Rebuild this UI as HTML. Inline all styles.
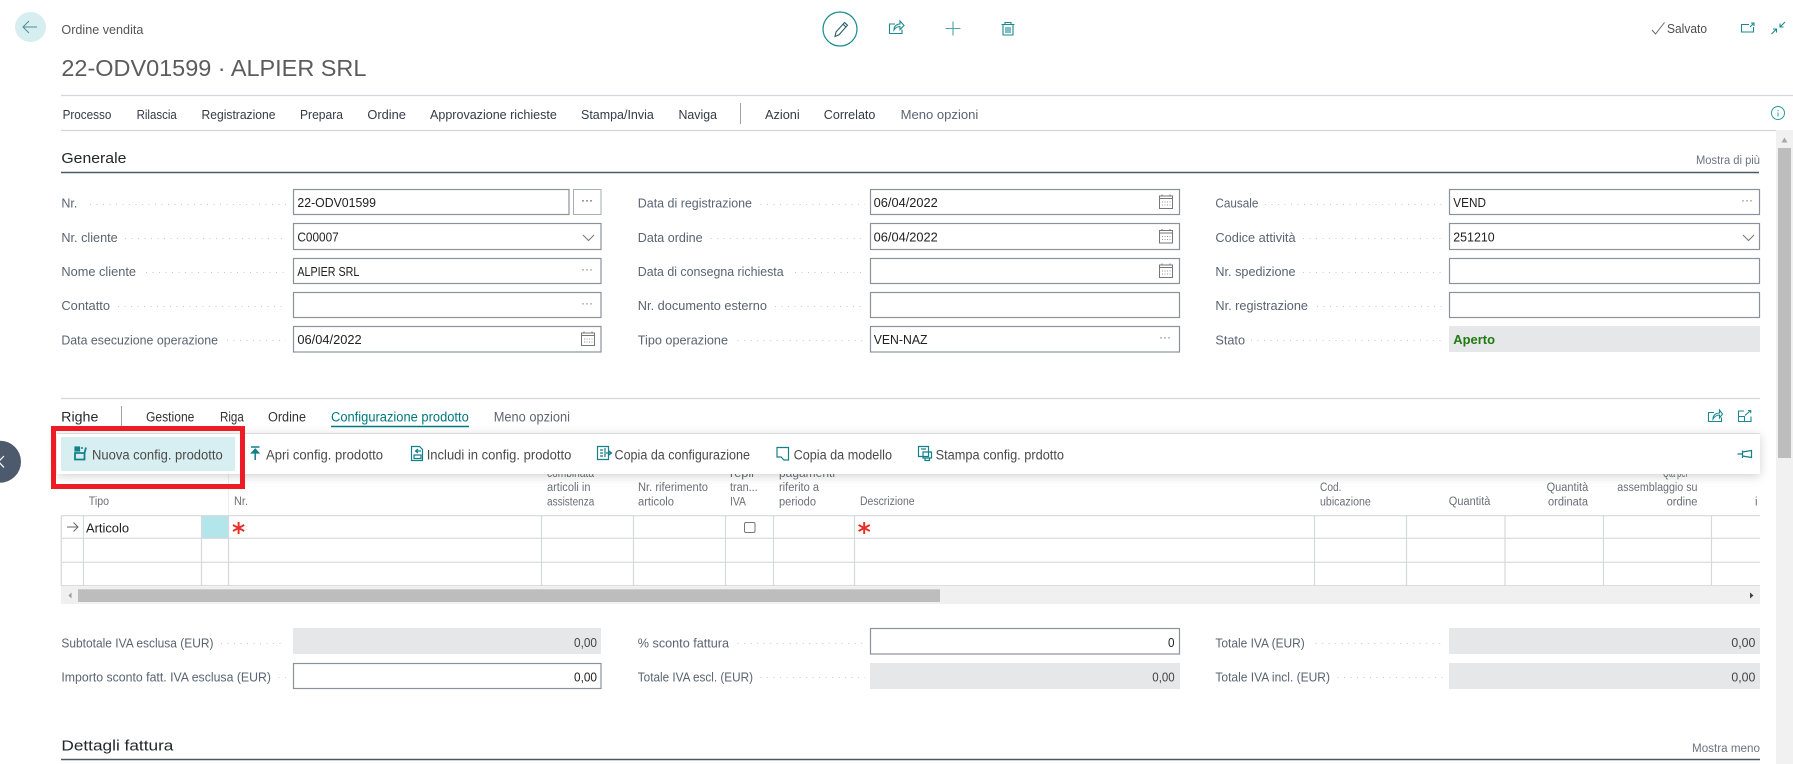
<!DOCTYPE html>
<html lang="it"><head><meta charset="utf-8"><title>Ordine vendita</title>
<style>
html,body{margin:0;padding:0;background:#fff;width:1793px;height:764px;overflow:hidden}
svg{display:block;font-family:"Liberation Sans",sans-serif}
.l{font-size:12.5px;fill:#5a6472}
.v{font-size:12.5px;fill:#212121}
.n{font-size:12.5px;fill:#333b45}
.a{font-size:13.5px;fill:#4a4a4a}
.h{font-size:11.5px;fill:#6b7480}
.d{stroke:#c4c8cc;stroke-width:1;stroke-dasharray:1 5.5;fill:none}
.i{fill:#fff;stroke:#8a939c;stroke-width:1.2}
.g{fill:#e6e7e8}
.t{stroke:#1a8a90;stroke-width:1.1;fill:none}
.s{stroke:#d3d6da;stroke-width:1.2}
.c{stroke:#d6d8db;stroke-width:1.2}
.cal{stroke:#777;stroke-width:1;fill:none}
.cal path+path{stroke:#999;stroke-dasharray:1 1.5}
.dots{font-size:12px;fill:#777}
</style></head><body>
<svg width="1793" height="764" viewBox="0 0 1793 764" xmlns="http://www.w3.org/2000/svg">
<rect width="1793" height="764" fill="#fff"/>

<!-- page scrollbar -->
<rect x="1776" y="130" width="17" height="634" fill="#f1f1f1"/>
<rect x="1778" y="148" width="13" height="310" fill="#bdbdbd"/>
<path d="M1784.500 137.500l-3 5h6z" fill="#a8a8a8"/>

<!-- back -->
<ellipse cx="30.500" cy="27" rx="15.500" ry="15" fill="#d6eef0"/>
<path d="M37 27H23.500M29 21l-6 6 6 6" fill="none" stroke="#4d8f96" stroke-width="1"/>
<text x="61.400" y="34" class="l" style="font-size:12.500px;fill:#555" textLength="82" lengthAdjust="spacingAndGlyphs">Ordine vendita</text>
<text x="61.400" y="76" style="font-size:23px;fill:#5c5c5c" textLength="305" lengthAdjust="spacingAndGlyphs">22-ODV01599 · ALPIER SRL</text>

<!-- top icons -->
<ellipse cx="840" cy="29" rx="17" ry="17" fill="#fff" stroke="#168a90" stroke-width="1.200"/>
<path class="t" d="M835 36.500l1-4.500 8.500-9.500 3 2.700-8.500 9.600zM843 24.200l3 2.700" style="stroke:#2a5f63"/>
<path class="t" d="M895 24h-5.500v9.500h12.500v-4M894 30c0-4 3-6 6-6v-3l4 4.500-4 4v-3c-2.500 0-4.500 1-6 3.500z"/>
<path class="t" d="M953 21.500v14M945.500 28.500h15" style="stroke:#4aa6ab"/>
<path class="t" d="M1001.500 24.500h13M1005 24.500v-2h6v2M1003 24.500v10.500h10v-10.500M1006 27v6M1008 27v6M1010 27v6"/>
<path d="M1652 30l3.500 4 9-11.500" fill="none" stroke="#666" stroke-width="1"/>
<text x="1667" y="33" class="l" textLength="40" lengthAdjust="spacingAndGlyphs" style="fill:#4d4d4d">Salvato</text>
<path class="t" d="M1749 24.500h-7.500v7.500h12v-5M1750 27l4-4M1751 23h3v3"/>
<path class="t" d="M1785 22l-5 5M1780 23.500v3.500h3.500M1771.500 34l5-5M1776.500 32.500v-3.500h-3.500"/>

<!-- header lines & nav -->
<line x1="61" y1="95.500" x2="1793" y2="95.500" class="s"/>
<line x1="61" y1="130.500" x2="1776" y2="130.500" class="s"/>
<text y="119" class="n" x="62.600" textLength="48.800" lengthAdjust="spacingAndGlyphs">Processo</text>
<text y="119" class="n" x="136.600" textLength="40.200" lengthAdjust="spacingAndGlyphs">Rilascia</text>
<text y="119" class="n" x="201.500" textLength="74" lengthAdjust="spacingAndGlyphs">Registrazione</text>
<text y="119" class="n" x="300" textLength="43" lengthAdjust="spacingAndGlyphs">Prepara</text>
<text y="119" class="n" x="367.400" textLength="38.500" lengthAdjust="spacingAndGlyphs">Ordine</text>
<text y="119" class="n" x="430" textLength="126.800" lengthAdjust="spacingAndGlyphs">Approvazione richieste</text>
<text y="119" class="n" x="581" textLength="72.800" lengthAdjust="spacingAndGlyphs">Stampa/Invia</text>
<text y="119" class="n" x="678.500" textLength="38.500" lengthAdjust="spacingAndGlyphs">Naviga</text>
<line x1="740.500" y1="103" x2="740.500" y2="124" stroke="#9ba1a8"/>
<text y="119" class="n" x="765" textLength="34.700" lengthAdjust="spacingAndGlyphs">Azioni</text>
<text y="119" class="n" x="823.800" textLength="51.600" lengthAdjust="spacingAndGlyphs">Correlato</text>
<text y="119" class="l" x="900.600" textLength="77.700" lengthAdjust="spacingAndGlyphs">Meno opzioni</text>
<circle cx="1778" cy="113" r="6.500" fill="none" stroke="#2a9aa0" stroke-width="1"/>
<path d="M1778 110v1.200M1778 112.500v4" stroke="#2a9aa0" stroke-width="1"/>

<!-- Generale -->
<text x="61.400" y="163" style="font-size:15px;fill:#23272b" textLength="65" lengthAdjust="spacingAndGlyphs">Generale</text>
<text x="1696" y="164" class="h" textLength="64" lengthAdjust="spacingAndGlyphs">Mostra di più</text>
<line x1="61" y1="172.500" x2="1759" y2="172.500" stroke="#4b5a68" stroke-width="1.500"/>

<!-- row 1 -->
<text x="61.400" y="207.500" class="l" textLength="16" lengthAdjust="spacingAndGlyphs">Nr.</text><line x1="90" x2="286" y1="204.500" y2="204.500" class="d"/>
<rect x="293.500" y="189.500" width="275.500" height="25" class="i"/>
<text x="297.400" y="207" class="v" textLength="78.600" lengthAdjust="spacingAndGlyphs">22-ODV01599</text>
<rect x="573.500" y="189.500" width="27.500" height="25" fill="#fff" stroke="#a7adb3" stroke-width="1"/>
<text x="581" y="204" class="dots" style="fill:#222">···</text>

<text x="637.800" y="207.500" class="l" textLength="114.200" lengthAdjust="spacingAndGlyphs">Data di registrazione</text><line x1="760.600" x2="865" y1="204.500" y2="204.500" class="d"/>
<rect x="870.500" y="189.500" width="309" height="25" class="i"/>
<text x="873.700" y="207" class="v" textLength="64.100" lengthAdjust="spacingAndGlyphs">06/04/2022</text>
<g class="cal"><path d="M1159.500 196h13v12.500h-13zM1159.500 198.500h13M1162 196v-1.500M1170 196v-1.500"/><path d="M1162 202h9M1162 205h9"/></g>

<text x="1215.400" y="207.500" class="l" textLength="43" lengthAdjust="spacingAndGlyphs">Causale</text><line x1="1265" x2="1443" y1="204.500" y2="204.500" class="d"/>
<rect x="1449.500" y="189.500" width="310" height="25" class="i"/>
<text x="1453.300" y="207" class="v" textLength="32.700" lengthAdjust="spacingAndGlyphs">VEND</text>
<text x="1741" y="204" class="dots">···</text>

<!-- row 2 -->
<text x="61.400" y="242" class="l" textLength="56.300" lengthAdjust="spacingAndGlyphs">Nr. cliente</text><line x1="125" x2="286" y1="238.500" y2="238.500" class="d"/>
<rect x="293.500" y="223.500" width="307.500" height="26" class="i"/>
<text x="297.400" y="241.500" class="v" textLength="41.300" lengthAdjust="spacingAndGlyphs">C00007</text>
<path d="M583 235l5.500 5.500 5.500-5.500" fill="none" stroke="#777" stroke-width="1"/>

<text x="637.800" y="242" class="l" textLength="64.800" lengthAdjust="spacingAndGlyphs">Data ordine</text><line x1="710.700" x2="865" y1="238.500" y2="238.500" class="d"/>
<rect x="870.500" y="223.500" width="309" height="26" class="i"/>
<text x="873.700" y="241.500" class="v" textLength="64.100" lengthAdjust="spacingAndGlyphs">06/04/2022</text>
<g class="cal"><path d="M1159.500 230.500h13v12.500h-13zM1159.500 233h13M1162 230.500v-1.500M1170 230.500v-1.500"/><path d="M1162 236.500h9M1162 239.500h9"/></g>

<text x="1215.400" y="242" class="l" textLength="80.200" lengthAdjust="spacingAndGlyphs">Codice attività</text><line x1="1303" x2="1443" y1="238.500" y2="238.500" class="d"/>
<rect x="1449.500" y="223.500" width="310" height="26" class="i"/>
<text x="1453.300" y="241.500" class="v" textLength="41.300" lengthAdjust="spacingAndGlyphs">251210</text>
<path d="M1743 235l5.500 5.500 5.500-5.500" fill="none" stroke="#777" stroke-width="1"/>

<!-- row 3 -->
<text x="61.400" y="276" class="l" textLength="74.600" lengthAdjust="spacingAndGlyphs">Nome cliente</text><line x1="146" x2="286" y1="272.500" y2="272.500" class="d"/>
<rect x="293.500" y="258.500" width="307.500" height="25" class="i"/>
<text x="297.400" y="276" class="v" textLength="62" lengthAdjust="spacingAndGlyphs">ALPIER SRL</text>
<text x="581" y="273" class="dots">···</text>

<text x="637.800" y="276" class="l" textLength="145.800" lengthAdjust="spacingAndGlyphs">Data di consegna richiesta</text><line x1="795" x2="865" y1="272.500" y2="272.500" class="d"/>
<rect x="870.500" y="258.500" width="309" height="25" class="i"/>
<g class="cal"><path d="M1159.500 265h13v12.500h-13zM1159.500 267.500h13M1162 265v-1.500M1170 265v-1.500"/><path d="M1162 271h9M1162 274h9"/></g>

<text x="1215.400" y="276" class="l" textLength="80.200" lengthAdjust="spacingAndGlyphs">Nr. spedizione</text><line x1="1303" x2="1443" y1="272.500" y2="272.500" class="d"/>
<rect x="1449.500" y="258.500" width="310" height="25" class="i"/>

<!-- row 4 -->
<text x="61.400" y="310" class="l" textLength="48.600" lengthAdjust="spacingAndGlyphs">Contatto</text><line x1="118" x2="286" y1="306.500" y2="306.500" class="d"/>
<rect x="293.500" y="292.500" width="307.500" height="25" class="i"/>
<text x="581" y="307" class="dots">···</text>

<text x="637.800" y="310" class="l" textLength="129.200" lengthAdjust="spacingAndGlyphs">Nr. documento esterno</text><line x1="775" x2="865" y1="306.500" y2="306.500" class="d"/>
<rect x="870.500" y="292.500" width="309" height="25" class="i"/>

<text x="1215.400" y="310" class="l" textLength="92.600" lengthAdjust="spacingAndGlyphs">Nr. registrazione</text><line x1="1317" x2="1443" y1="306.500" y2="306.500" class="d"/>
<rect x="1449.500" y="292.500" width="310" height="25" class="i"/>

<!-- row 5 -->
<text x="61.400" y="344.500" class="l" textLength="156.600" lengthAdjust="spacingAndGlyphs">Data esecuzione operazione</text><line x1="227" x2="286" y1="340.500" y2="340.500" class="d"/>
<rect x="293.500" y="326.500" width="307.500" height="25.500" class="i"/>
<text x="297.400" y="344" class="v" textLength="64.300" lengthAdjust="spacingAndGlyphs">06/04/2022</text>
<g class="cal"><path d="M581.500 333h13v12.500h-13zM581.500 335.500h13M584 333v-1.500M592 333v-1.500"/><path d="M584 339h9M584 342h9"/></g>

<text x="637.800" y="344.500" class="l" textLength="90.200" lengthAdjust="spacingAndGlyphs">Tipo operazione</text><line x1="737.700" x2="865" y1="340.500" y2="340.500" class="d"/>
<rect x="870.500" y="326.500" width="309" height="25.500" class="i"/>
<text x="873.700" y="344" class="v" textLength="53.800" lengthAdjust="spacingAndGlyphs">VEN-NAZ</text>
<text x="1159" y="341" class="dots">···</text>

<text x="1215.400" y="344.500" class="l" textLength="29.600" lengthAdjust="spacingAndGlyphs">Stato</text><line x1="1251" x2="1443" y1="340.500" y2="340.500" class="d"/>
<rect x="1449" y="326" width="311" height="26" class="g"/>
<text x="1453.300" y="344" style="font-size:12.500px;font-weight:bold;fill:#1f7a12" textLength="41.700" lengthAdjust="spacingAndGlyphs">Aperto</text>

<!-- Righe -->
<line x1="61" y1="398.500" x2="1760" y2="398.500" class="s"/>
<text x="61.200" y="421.500" style="font-size:14px;fill:#26292d" textLength="37.200" lengthAdjust="spacingAndGlyphs">Righe</text>
<line x1="121.500" y1="406" x2="121.500" y2="426" stroke="#9ba1a8"/>
<text x="146" y="421.500" class="a" style="fill:#333" textLength="48.400" lengthAdjust="spacingAndGlyphs">Gestione</text>
<text x="220" y="421.500" class="a" style="fill:#333" textLength="23.800" lengthAdjust="spacingAndGlyphs">Riga</text>
<text x="268" y="421.500" class="a" style="fill:#333" textLength="38" lengthAdjust="spacingAndGlyphs">Ordine</text>
<text x="331" y="421.500" class="a" style="fill:#00787e" textLength="137.800" lengthAdjust="spacingAndGlyphs">Configurazione prodotto</text>
<line x1="331" y1="426.500" x2="469" y2="426.500" stroke="#00787e" stroke-width="1.400"/>
<text x="493.700" y="421.500" class="a" style="fill:#5f6670" textLength="76.300" lengthAdjust="spacingAndGlyphs">Meno opzioni</text>
<path class="t" d="M1714 412.500h-5.500v9h13v-4M1713 419c0-4.500 3.500-6 6.500-6v-3l3 4-3 4v-3c-2.500 0-5 1.500-6.500 4z"/>
<path class="t" d="M1744 411h-5.500v10.500h12.500v-5M1745 415.500l5.500-5M1748 410.500h2.700v2.700M1738.500 416.500h6v5"/>

<!-- table headers (partial top lines hidden by bar) -->
<g class="h" style="font-size:11.500px;fill:#6a6f76">
<text x="547" y="477" textLength="47" lengthAdjust="spacingAndGlyphs">combinata</text>
<text x="730" y="477" textLength="24" lengthAdjust="spacingAndGlyphs">repli</text>
<text x="779" y="477" textLength="56" lengthAdjust="spacingAndGlyphs">pagamenti</text>
<text x="1663" y="477" textLength="25" lengthAdjust="spacingAndGlyphs">Qtà per</text>
<text x="88.800" y="505" textLength="20.200" lengthAdjust="spacingAndGlyphs">Tipo</text>
<text x="234" y="505" textLength="14" lengthAdjust="spacingAndGlyphs">Nr.</text>
<text x="547" y="491" textLength="43.500" lengthAdjust="spacingAndGlyphs">articoli in</text>
<text x="547" y="505.500" textLength="47.300" lengthAdjust="spacingAndGlyphs">assistenza</text>
<text x="638" y="491" textLength="70" lengthAdjust="spacingAndGlyphs">Nr. riferimento</text>
<text x="638" y="505.500" textLength="36" lengthAdjust="spacingAndGlyphs">articolo</text>
<text x="730" y="491" textLength="27.700" lengthAdjust="spacingAndGlyphs">tran...</text>
<text x="730" y="505.500" textLength="16" lengthAdjust="spacingAndGlyphs">IVA</text>
<text x="779" y="491" textLength="40" lengthAdjust="spacingAndGlyphs">riferito a</text>
<text x="779" y="505.500" textLength="37" lengthAdjust="spacingAndGlyphs">periodo</text>
<text x="860" y="505" textLength="54.600" lengthAdjust="spacingAndGlyphs">Descrizione</text>
<text x="1320" y="491" textLength="21.400" lengthAdjust="spacingAndGlyphs">Cod.</text>
<text x="1320" y="505.500" textLength="50.800" lengthAdjust="spacingAndGlyphs">ubicazione</text>
<text x="1448.800" y="505" textLength="41.600" lengthAdjust="spacingAndGlyphs">Quantità</text>
<text x="1546.600" y="491" textLength="41.600" lengthAdjust="spacingAndGlyphs">Quantità</text>
<text x="1548" y="505.500" textLength="40" lengthAdjust="spacingAndGlyphs">ordinata</text>
<text x="1617.300" y="491" textLength="80.200" lengthAdjust="spacingAndGlyphs">assemblaggio su</text>
<text x="1666.600" y="505.500" textLength="30.900" lengthAdjust="spacingAndGlyphs">ordine</text>
<text x="1755" y="505.500">i</text>
</g>
<line x1="228.500" y1="474" x2="228.500" y2="515" stroke="#eeeeee"/>

<!-- table -->
<rect x="201.500" y="516" width="27" height="22" fill="#b2e6ea"/>
<g class="c">
<line x1="61" y1="515.700" x2="1760" y2="515.700"/>
<line x1="61" y1="538.300" x2="1760" y2="538.300"/>
<line x1="61" y1="562.300" x2="1760" y2="562.300"/>
<line x1="61" y1="585.700" x2="1760" y2="585.700"/>
<line x1="61.300" y1="515.700" x2="61.300" y2="585.700"/>
<line x1="83.500" y1="515.700" x2="83.500" y2="585.700"/>
<line x1="201.500" y1="515.700" x2="201.500" y2="585.700"/>
<line x1="228.500" y1="515.700" x2="228.500" y2="585.700"/>
<line x1="541.500" y1="515.700" x2="541.500" y2="585.700"/>
<line x1="633.500" y1="515.700" x2="633.500" y2="585.700"/>
<line x1="725.500" y1="515.700" x2="725.500" y2="585.700"/>
<line x1="773.500" y1="515.700" x2="773.500" y2="585.700"/>
<line x1="854.500" y1="515.700" x2="854.500" y2="585.700"/>
<line x1="1314.500" y1="515.700" x2="1314.500" y2="585.700"/>
<line x1="1406.500" y1="515.700" x2="1406.500" y2="585.700"/>
<line x1="1505" y1="515.700" x2="1505" y2="585.700"/>
<line x1="1603.500" y1="515.700" x2="1603.500" y2="585.700"/>
<line x1="1711.500" y1="515.700" x2="1711.500" y2="585.700"/>
</g>
<path d="M67 527h11M73.500 522.500l4.500 4.500-4.500 4.500" fill="none" stroke="#666" stroke-width="1"/>
<text x="86" y="532.700" class="v" textLength="43" lengthAdjust="spacingAndGlyphs">Articolo</text>
<path d="M238.600 522v12M233 525l11.200 6M244.200 525l-11.200 6" stroke="#e8302a" stroke-width="2" fill="none"/>
<path d="M864.200 522v12M858.600 525l11.200 6M869.800 525l-11.200 6" stroke="#e8302a" stroke-width="2" fill="none"/>
<rect x="744.500" y="522.500" width="10.500" height="10" rx="1.500" fill="#fff" stroke="#777" stroke-width="1"/>

<!-- h scrollbar -->
<rect x="61" y="586.700" width="1699" height="17.300" fill="#f0f0f0"/>
<rect x="78" y="589.300" width="862" height="12.700" fill="#bdbdbd"/>
<path d="M71.500 592.500v6l-3-3z" fill="#9a9a9a"/>
<path d="M1750 592.500v6l3.500-3z" fill="#444"/>

<!-- action bar -->
<defs><filter id="sh" x="-5%" y="-40%" width="110%" height="200%"><feDropShadow dx="0" dy="2" stdDeviation="5" flood-color="#000" flood-opacity=".18"/></filter></defs>
<rect x="57" y="433.500" width="1703" height="40.500" fill="#fff" filter="url(#sh)"/>
<line x1="57" y1="433.500" x2="1760" y2="433.500" stroke="#d9dbde" stroke-width="1"/>
<rect x="61" y="437" width="174" height="34" rx="1.500" fill="#d7eff1"/>

<g fill="none" stroke="#14808a" stroke-width="1.200">
<path d="M75 453h9.500v6.500h-9.500zM86 447.500l-1.500 5.500" stroke-width="1.800"/><rect x="75" y="447" width="4.500" height="4" fill="#14808a"/><path d="M81 448h2" stroke-width="1.500"/>
<path d="M251 447h8.500M255.200 460v-10" stroke-width="1.500"/><path d="M251.500 453l3.700-4 3.700 4z" fill="#14808a"/>
<path d="M411.500 446.500h8l3 3v11h-11zM414 455h7v3.500h-7zM421 451h-5M418 449l-2.500 2 2.500 2"/>
<path d="M597.500 446.500h11v13h-11zM600 450h3M600 453h3M600 456h3M605 448v9"/><path d="M606 453h5M609 451l2.500 2-2.500 2" stroke="#14808a"/>
<path d="M776.500 447.500h11.500v9.500h-4l-3 3h-4.500z" transform="matrix(-1 0 0 1 1565 0)"/>
<path d="M918.500 446.500h10v10h-10zM921 449h5M923 452h8.500v6h-8.500zM925 458v2.500h4.500V458"/>
<path d="M1737.500 454h5M1742.500 450.500v7.500M1742.500 452l9-1.500v7l-9-1.500"/>
</g>
<text x="92" y="459.300" class="a" textLength="130.700" lengthAdjust="spacingAndGlyphs">Nuova config. prodotto</text>
<text x="266" y="459.300" class="a" textLength="117" lengthAdjust="spacingAndGlyphs">Apri config. prodotto</text>
<text x="426.700" y="459.300" class="a" textLength="144.700" lengthAdjust="spacingAndGlyphs">Includi in config. prodotto</text>
<text x="614.500" y="459.300" class="a" textLength="135.500" lengthAdjust="spacingAndGlyphs">Copia da configurazione</text>
<text x="793.600" y="459.300" class="a" textLength="98.400" lengthAdjust="spacingAndGlyphs">Copia da modello</text>
<text x="935.600" y="459.300" class="a" textLength="128.400" lengthAdjust="spacingAndGlyphs">Stampa config. prdotto</text>

<!-- red highlight -->
<rect x="53.500" y="428.500" width="189" height="58" fill="none" stroke="#ed1c24" stroke-width="5"/>

<!-- left dark circle -->
<circle cx="0" cy="461.700" r="21" fill="#4d5a6e"/>
<path d="M4 456l-5.500 5.700 5.500 5.700" fill="none" stroke="#fff" stroke-width="1.200"/>

<!-- totals -->
<text x="61.400" y="647.500" class="l" textLength="152.100" lengthAdjust="spacingAndGlyphs">Subtotale IVA esclusa (EUR)</text><line x1="221" x2="286" y1="643.500" y2="643.500" class="d"/>
<rect x="293" y="628" width="308" height="26" class="g"/>
<text x="574" y="647" class="l" textLength="23" lengthAdjust="spacingAndGlyphs" style="fill:#444">0,00</text>

<text x="61.400" y="681.500" class="l" textLength="209.600" lengthAdjust="spacingAndGlyphs">Importo sconto fatt. IVA esclusa (EUR)</text><line x1="278.400" x2="286" y1="677.500" y2="677.500" class="d"/>
<rect x="293.500" y="663.500" width="307.500" height="25" class="i"/>
<text x="574" y="681.500" class="v" textLength="23" lengthAdjust="spacingAndGlyphs">0,00</text>

<text x="637.800" y="647.500" class="l" textLength="91.200" lengthAdjust="spacingAndGlyphs">% sconto fattura</text><line x1="737.700" x2="865" y1="643.500" y2="643.500" class="d"/>
<rect x="870.500" y="628.500" width="309" height="25.500" class="i"/>
<text x="1168" y="647" class="v" textLength="6.500" lengthAdjust="spacingAndGlyphs">0</text>

<text x="637.800" y="681.500" class="l" textLength="115.200" lengthAdjust="spacingAndGlyphs">Totale IVA escl. (EUR)</text><line x1="760.600" x2="865" y1="677.500" y2="677.500" class="d"/>
<rect x="870" y="663" width="310" height="26" class="g"/>
<text x="1152.300" y="681.500" class="l" textLength="22.400" lengthAdjust="spacingAndGlyphs" style="fill:#444">0,00</text>

<text x="1215.400" y="647.500" class="l" textLength="89.400" lengthAdjust="spacingAndGlyphs">Totale IVA (EUR)</text><line x1="1315.700" x2="1443" y1="643.500" y2="643.500" class="d"/>
<rect x="1449" y="628" width="311" height="26" class="g"/>
<text x="1731.400" y="647" class="l" textLength="24" lengthAdjust="spacingAndGlyphs" style="fill:#444">0,00</text>

<text x="1215.400" y="681.500" class="l" textLength="114.600" lengthAdjust="spacingAndGlyphs">Totale IVA incl. (EUR)</text><line x1="1337.500" x2="1443" y1="677.500" y2="677.500" class="d"/>
<rect x="1449" y="663" width="311" height="26" class="g"/>
<text x="1731.400" y="681.500" class="l" textLength="24" lengthAdjust="spacingAndGlyphs" style="fill:#444">0,00</text>

<!-- Dettagli -->
<text x="61.400" y="750.500" style="font-size:15px;fill:#23272b" textLength="112" lengthAdjust="spacingAndGlyphs">Dettagli fattura</text>
<text x="1692" y="752" class="h" textLength="68" lengthAdjust="spacingAndGlyphs">Mostra meno</text>
<line x1="61" y1="759.500" x2="1760" y2="759.500" stroke="#4b5a68" stroke-width="1.500"/>
</svg>
</body></html>
